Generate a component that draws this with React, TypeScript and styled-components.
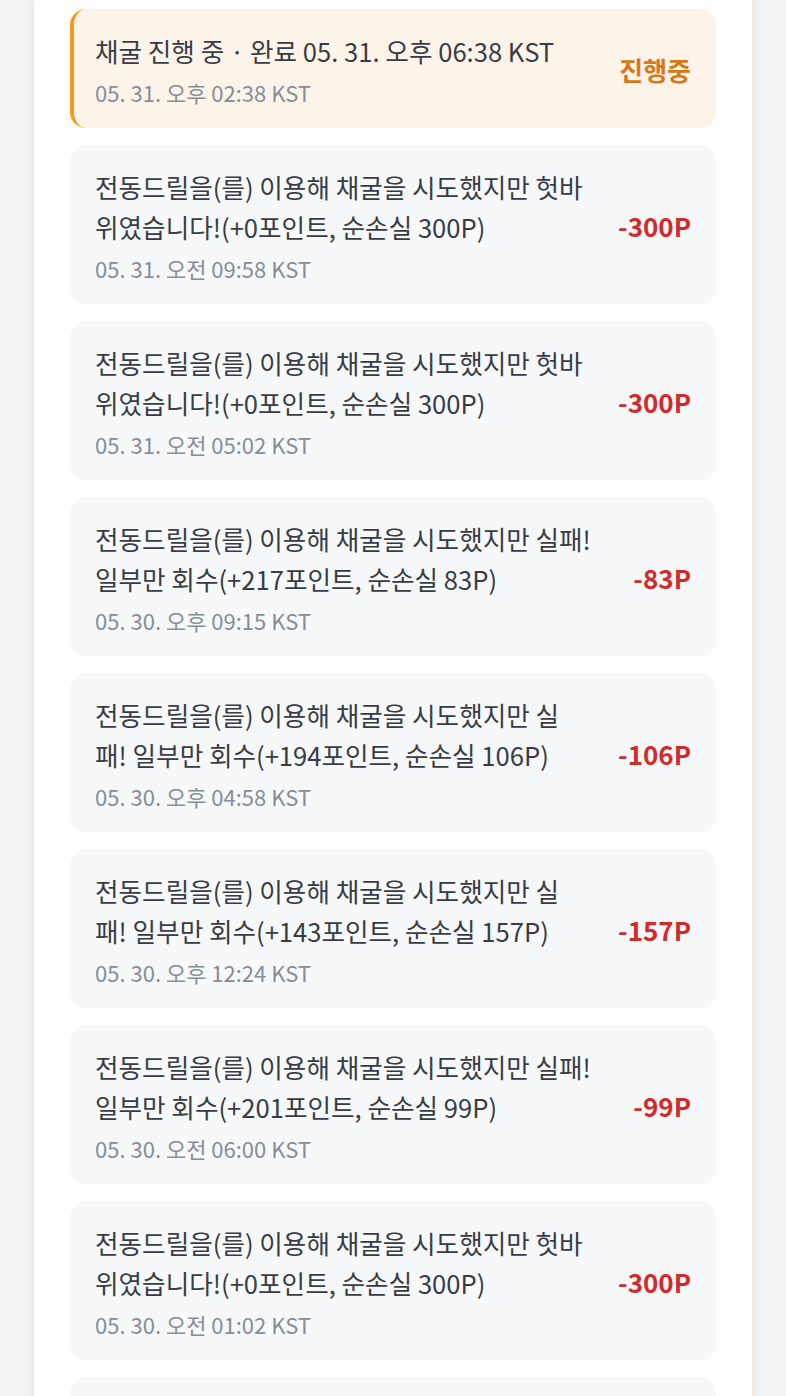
import React from 'react';
import styled, {createGlobalStyle} from "styled-components";

type LogItem = {
  message: string;
  time: string;
  amount: string;
  pending?: boolean;
};

const logs: LogItem[] = [
  {message: "채굴 진행 중 · 완료 05. 31. 오후 06:38 KST", time: "05. 31. 오후 02:38 KST", amount: "진행중", pending: true},
  {message: "전동드릴을(를) 이용해 채굴을 시도했지만 헛바위였습니다!(+0포인트, 순손실 300P)", time: "05. 31. 오전 09:58 KST", amount: "-300P"},
  {message: "전동드릴을(를) 이용해 채굴을 시도했지만 헛바위였습니다!(+0포인트, 순손실 300P)", time: "05. 31. 오전 05:02 KST", amount: "-300P"},
  {message: "전동드릴을(를) 이용해 채굴을 시도했지만 실패! 일부만 회수(+217포인트, 순손실 83P)", time: "05. 30. 오후 09:15 KST", amount: "-83P"},
  {message: "전동드릴을(를) 이용해 채굴을 시도했지만 실패! 일부만 회수(+194포인트, 순손실 106P)", time: "05. 30. 오후 04:58 KST", amount: "-106P"},
  {message: "전동드릴을(를) 이용해 채굴을 시도했지만 실패! 일부만 회수(+143포인트, 순손실 157P)", time: "05. 30. 오후 12:24 KST", amount: "-157P"},
  {message: "전동드릴을(를) 이용해 채굴을 시도했지만 실패! 일부만 회수(+201포인트, 순손실 99P)", time: "05. 30. 오전 06:00 KST", amount: "-99P"},
  {message: "전동드릴을(를) 이용해 채굴을 시도했지만 헛바위였습니다!(+0포인트, 순손실 300P)", time: "05. 30. 오전 01:02 KST", amount: "-300P"},
  {message: "전동드릴을(를) 이용해 채굴을 시도했지만 헛바위였습니다!(+0포인트, 순손실 300P)", time: "05. 29. 오후 08:41 KST", amount: "-300P"},
];

const App = () => {
  return (
    <>
      <GlobalStyle/>
      <StyledPanel>
        <LogList>
          {logs.map((log, index) => (
            <LogCard key={index} $pending={log.pending}>
              <LogBody>
                <LogMessage>{log.message}</LogMessage>
                <LogTime>{log.time}</LogTime>
              </LogBody>
              <LogAmount $pending={log.pending}>{log.amount}</LogAmount>
            </LogCard>
          ))}
        </LogList>
      </StyledPanel>
    </>
  );
};

export default App;

const GlobalStyle = createGlobalStyle`
  html, body {
    margin: 0;
    padding: 0;
    background: #f1f2f4;
  }

  body {
    font-family: "Noto Sans CJK KR", "Noto Sans", sans-serif;
    -webkit-font-smoothing: antialiased;
  }
`;

const StyledPanel = styled.main`
  box-sizing: border-box;
  width: 720px;
  margin: 0 auto;
  min-height: 1500px;
  background: #ffffff;
  border-left: 1px solid #fbe4d8;
  border-right: 1px solid #fbe4d8;
  box-shadow: 0 0 6px rgba(200, 205, 215, 0.35);
  padding: 9px 36px 40px;
`;

const LogList = styled.ul`
  list-style: none;
  margin: 0;
  padding: 0;
  display: flex;
  flex-direction: column;
  gap: 17px;
`;

const LogCard = styled.li<{ $pending?: boolean }>`
  display: flex;
  align-items: center;
  gap: 34px;
  border-radius: 16px;
  padding: 22px 25px 20px ${({$pending}) => ($pending ? "21px" : "25px")};
  background: ${({$pending}) => ($pending ? "#fdf4e9" : "#f7f8fa")};
  border-left: ${({$pending}) => ($pending ? "4px solid #f29b1b" : "none")};
`;

const LogBody = styled.div`
  flex: 1;
  min-width: 0;
`;

const LogMessage = styled.p`
  margin: 0;
  font-size: 25.6px;
  font-weight: 400;
  line-height: 40px;
  color: #383d45;
`;

const LogTime = styled.p`
  margin: 5px 0 0;
  font-size: 22px;
  line-height: 32px;
  color: #868e97;
`;

const LogAmount = styled.span<{ $pending?: boolean }>`
  flex-shrink: 0;
  font-size: 26px;
  font-weight: 700;
  color: ${({$pending}) => ($pending ? "#d9781a" : "#d32a2a")};
`;
